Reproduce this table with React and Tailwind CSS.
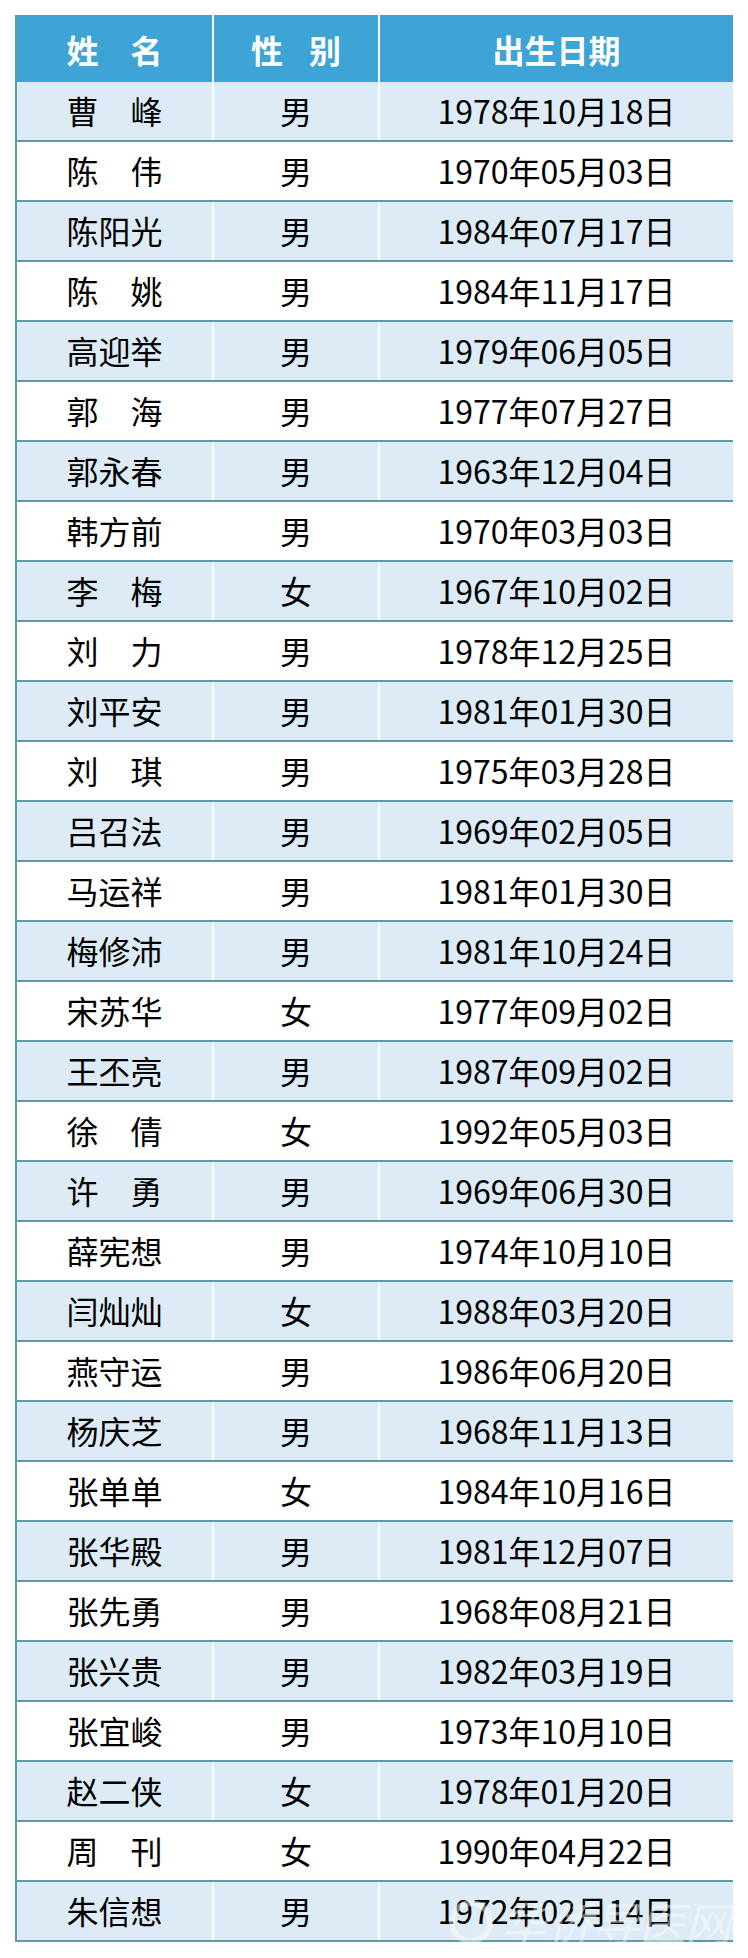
const rows = [
  ["曹峰", "男", "1978年10月18日"],
  ["陈伟", "男", "1970年05月03日"],
  ["陈阳光", "男", "1984年07月17日"],
  ["陈姚", "男", "1984年11月17日"],
  ["高迎举", "男", "1979年06月05日"],
  ["郭海", "男", "1977年07月27日"],
  ["郭永春", "男", "1963年12月04日"],
  ["韩方前", "男", "1970年03月03日"],
  ["李梅", "女", "1967年10月02日"],
  ["刘力", "男", "1978年12月25日"],
  ["刘平安", "男", "1981年01月30日"],
  ["刘琪", "男", "1975年03月28日"],
  ["吕召法", "男", "1969年02月05日"],
  ["马运祥", "男", "1981年01月30日"],
  ["梅修沛", "男", "1981年10月24日"],
  ["宋苏华", "女", "1977年09月02日"],
  ["王丕亮", "男", "1987年09月02日"],
  ["徐倩", "女", "1992年05月03日"],
  ["许勇", "男", "1969年06月30日"],
  ["薛宪想", "男", "1974年10月10日"],
  ["闫灿灿", "女", "1988年03月20日"],
  ["燕守运", "男", "1986年06月20日"],
  ["杨庆芝", "男", "1968年11月13日"],
  ["张单单", "女", "1984年10月16日"],
  ["张华殿", "男", "1981年12月07日"],
  ["张先勇", "男", "1968年08月21日"],
  ["张兴贵", "男", "1982年03月19日"],
  ["张宜峻", "男", "1973年10月10日"],
  ["赵二侠", "女", "1978年01月20日"],
  ["周刊", "女", "1990年04月22日"],
  ["朱信想", "男", "1972年02月14日"],
];

const cjk = { fontFamily: '"Noto Sans CJK SC", "Noto Sans", sans-serif' };
const dateFont = {
  fontFamily: '"Liberation Sans Narrow", "Noto Sans CJK SC", sans-serif',
};

// two-character names are spread to the width of three
const Spread = ({ text }) => (
  <div className="flex w-[96px] justify-between">
    {text.split("").map((c, i) => (
      <span key={i}>{c}</span>
    ))}
  </div>
);

export default function App() {
  return (
    <div className="min-h-[1958px] bg-white pt-[15px] pl-[15px]" style={cjk}>
      <div className="relative w-[718px] border-l-2 border-[#5d9bad]">
        <div className="grid h-[67px] grid-cols-[195px_166px_355px] bg-[#3ea4d6] text-[32px] font-bold text-white">
          <div className="flex items-center justify-center">
            <Spread text="姓 名" />
          </div>
          <div className="flex items-center justify-center border-l-2 border-white">
            <span className="tracking-[26px] pl-[26px]">性别</span>
          </div>
          <div className="flex items-center justify-center border-l-2 border-white">
            出生日期
          </div>
        </div>

        {rows.map(([name, sex, date], i) => (
          <div
            key={i}
            className={`grid h-[60px] grid-cols-[195px_166px_355px] border-b-2 border-[#5f9aab] text-[32px] leading-none text-black ${
              i % 2 === 0 ? "bg-[#dcebf5]" : "bg-white"
            }`}
          >
            <div className="flex items-center justify-center pb-[2px]">
              {name.length === 2 ? (
                <Spread text={name} />
              ) : (
                <span>{name}</span>
              )}
            </div>
            <div className="flex items-center justify-center border-l-2 border-white pb-[2px]">
              {sex}
            </div>
            <div
              className="flex items-center justify-center border-l-2 border-white pb-[2px]"
              style={dateFont}
            >
              {date}
            </div>
          </div>
        ))}

        {/* faint watermark over the last row */}
        <div className="pointer-events-none absolute bottom-[-14px] left-[432px] flex items-center gap-2 text-[46px] text-white/45 italic">
          <span className="h-[44px] w-[44px] rounded-full border-[6px] border-white/45" />
          <span>华侨导医网</span>
        </div>
      </div>
    </div>
  );
}
